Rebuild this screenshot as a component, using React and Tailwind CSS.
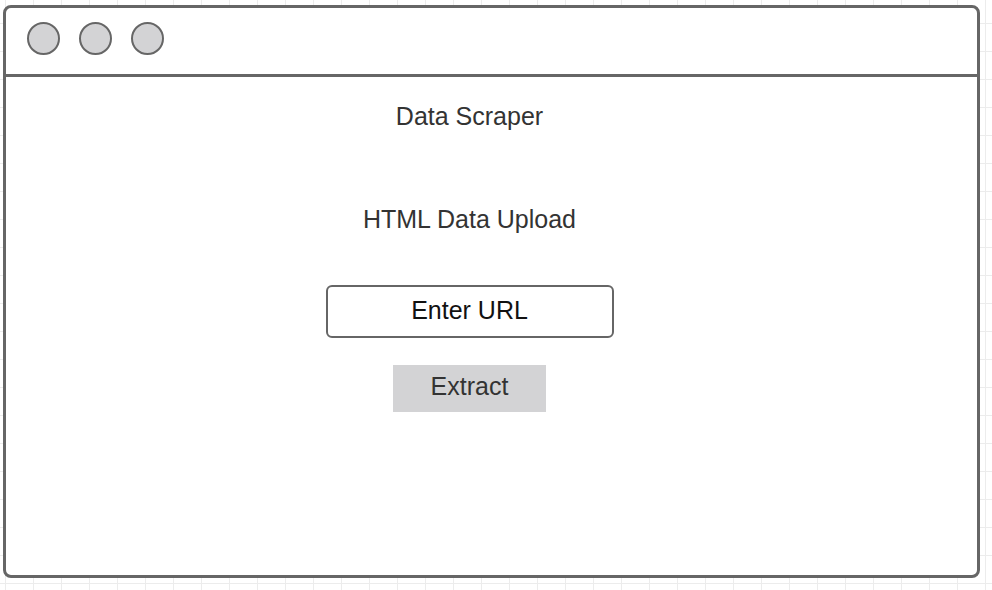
import React from "react";

function Dot() {
  return <div className="w-[33px] h-[33px] rounded-full border-[2.5px] border-[#666] bg-[#d3d3d5]" />;
}

export default function App() {
  return (
    <div
      className="w-[992px] h-[590px] overflow-hidden bg-white pt-[5px] pl-[3px] bg-[linear-gradient(to_right,#ececec_1px,transparent_1px),linear-gradient(to_bottom,#ececec_1px,transparent_1px)] bg-[size:28px_28px] bg-[position:5px_23px]"
      style={{ fontFamily: '"Liberation Sans", Arial, sans-serif' }}
    >
      <div className="w-[977px] h-[573px] border-[3px] border-[#666] rounded-[8px] bg-white flex flex-col">
        {/* title bar */}
        <div className="h-[69px] shrink-0 border-b-[3px] border-[#666] flex items-start gap-[19px] pl-[21px] pt-[14px]">
          <Dot />
          <Dot />
          <Dot />
        </div>

        {/* content */}
        <div className="flex flex-col items-center pr-[44px] pt-[24px] text-[25px]">
          <h1 className="leading-[30px] text-[#333]">Data Scraper</h1>
          <h2 className="leading-[30px] text-[#333] mt-[73px]">HTML Data Upload</h2>

          <div className="mt-[51px] w-[288px] h-[53px] border-[2.5px] border-[#666] rounded-[6px] flex items-center justify-center pb-[4px] text-[#111] leading-[30px]">
            Enter URL
          </div>

          <button className="mt-[27px] w-[153px] h-[47px] bg-[#d3d3d5] text-[#333] flex items-center justify-center pb-[5px] leading-[30px]">
            Extract
          </button>
        </div>
      </div>
    </div>
  );
}
